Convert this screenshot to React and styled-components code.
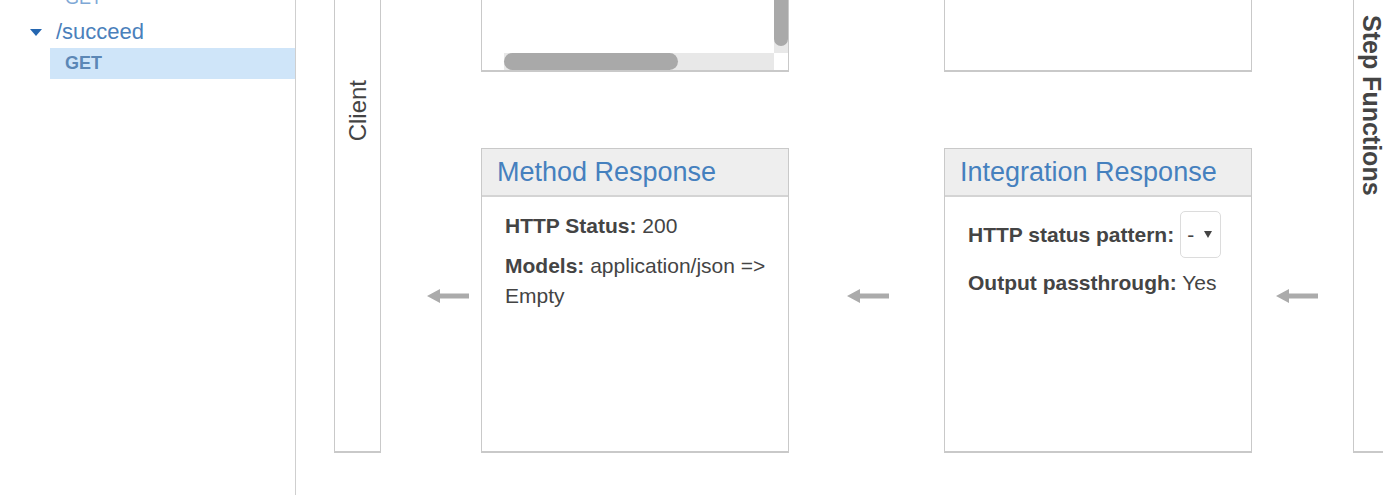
import styled, { createGlobalStyle } from "styled-components";

const GlobalStyle = createGlobalStyle`
  html, body {
    margin: 0;
    height: 100%;
    overflow: hidden;
    background: #fff;
  }
  body {
    font-family: "Liberation Sans", Arial, sans-serif;
    color: #444;
  }
`;

const Page = styled.div`
  display: flex;
  height: 100vh;
  overflow: hidden;
`;

const Sidebar = styled.nav`
  flex: 0 0 295px;
  border-right: 1px solid #cfcfcf;
  overflow: hidden;
`;

const Tree = styled.ul`
  list-style: none;
  margin: -17px 0 0;
  padding: 0;
`;

const ResourceRow = styled.li`
  display: flex;
  align-items: center;
  gap: 14px;
  height: 34px;
  padding: 2px 0 0 30px;
  box-sizing: border-box;
  font-size: 22px;
  line-height: 28px;
  color: #4a80bb;
`;

const Caret = styled.span`
  width: 0;
  height: 0;
  border-left: 6.5px solid transparent;
  border-right: 6.5px solid transparent;
  border-top: 7px solid #2466b0;
  margin-top: 1px;
`;

const MethodRow = styled.li`
  margin-left: 50px;
  height: 31px;
  padding-left: 15px;
  line-height: 31px;
  font-size: 18px;
  font-weight: ${({ $active }) => ($active ? 700 : 400)};
  color: ${({ $active }) => ($active ? "#5b87b6" : "#7ea8d6")};
  background: ${({ $active }) => ($active ? "#cfe5f9" : "transparent")};
`;

const Main = styled.main`
  flex: 1;
  overflow: hidden;
  padding-left: 38px;
`;

const Flow = styled.div`
  display: grid;
  grid-template-columns: 47px 100px 308px 155px 308px 101px 47px;
  grid-template-rows: 303px 305px;
  row-gap: 76px;
  margin-top: -231px;
`;

const SideLabel = styled.div`
  grid-row: 1 / span 2;
  grid-column: ${({ $col }) => $col};
  display: flex;
  align-items: center;
  justify-content: center;
  border: 1px solid #c9c9c9;
  border-bottom-width: 2px;
  padding-bottom: ${({ $lift }) => $lift || 0}px;
  padding-right: ${({ $shift }) => $shift || 0}px;
  box-sizing: border-box;
`;

const SideText = styled.span`
  writing-mode: vertical-rl;
  transform: ${({ $flip }) => ($flip ? "rotate(180deg)" : "none")};
  font-size: ${({ $bold }) => ($bold ? 25 : 24)}px;
  font-weight: ${({ $bold }) => ($bold ? 700 : 400)};
  color: #444;
  white-space: nowrap;
`;

const ArrowCell = styled.div`
  display: flex;
  align-items: center;
  padding-left: ${({ $inset }) => $inset}px;
  padding-bottom: 10px;
`;

const Box = styled.section`
  display: flex;
  flex-direction: column;
  border: 1px solid #c9c9c9;
  border-bottom-width: 2px;
  background: #fff;
  overflow: hidden;
  min-height: 0;
`;

const BoxHeader = styled.header`
  flex: 0 0 45px;
  padding: 1px 15px 0;
  background: #eeeeee;
  border-bottom: 2px solid #d4d4d4;
  font-size: 27px;
  line-height: 45px;
  color: #4580be;
  white-space: nowrap;
`;

const BoxBody = styled.div`
  padding: 14px 12px 0 23px;
  font-size: 21px;
  line-height: 30px;
`;

const Line = styled.div`
  display: flex;
  flex-wrap: wrap;
  align-items: center;
  column-gap: 6px;
  margin-bottom: 10px;
`;

const Text = styled.p`
  margin: 0 0 10px;
`;

const Label = styled.b`
  font-weight: 700;
`;

const Select = styled.div`
  display: inline-flex;
  align-items: center;
  gap: 10px;
  height: 47px;
  padding: 0 8px 0 6px;
  box-sizing: border-box;
  border: 1px solid #dcdcdc;
  border-radius: 5px;
  font-size: 21px;
`;

const SelectCaret = styled.span`
  width: 0;
  height: 0;
  border-left: 4.5px solid transparent;
  border-right: 4.5px solid transparent;
  border-top: 7px solid #444;
`;

const ScrollArea = styled.div`
  flex: 1;
  display: grid;
  grid-template-columns: 1fr 14px;
  grid-template-rows: 1fr 17px;
  min-height: 0;
`;

const VTrack = styled.div`
  display: flex;
  flex-direction: column;
  background: #e8e8e8;
  padding-bottom: 7px;
`;

const VThumb = styled.div`
  flex: 1;
  background: #a9a9a9;
  border-radius: 0 0 7px 7px;
`;

const HTrack = styled.div`
  margin-left: 22px;
  background: #e8e8e8;
`;

const HThumb = styled.div`
  width: 174px;
  height: 100%;
  background: #a9a9a9;
  border-radius: 9px;
`;

function Arrow({ dir = "left" }) {
  return (
    <svg
      width="42"
      height="16"
      viewBox="0 0 42 16"
      style={{ transform: dir === "right" ? "scaleX(-1)" : "none" }}
    >
      <path d="M0 8 L13 1 L13 5.5 L42 5.5 L42 10.5 L13 10.5 L13 15 Z" fill="#ababab" />
    </svg>
  );
}

export default function App() {
  return (
    <Page>
      <GlobalStyle />
      <Sidebar>
        <Tree>
          <MethodRow>GET</MethodRow>
          <ResourceRow>
            <Caret />
            /succeed
          </ResourceRow>
          <MethodRow $active>GET</MethodRow>
        </Tree>
      </Sidebar>

      <Main>
        <Flow>
          <SideLabel $col={1}>
            <SideText $flip>Client</SideText>
          </SideLabel>

          <ArrowCell $inset={46}>
            <Arrow dir="right" />
          </ArrowCell>

          <Box>
            <BoxHeader>Method Request</BoxHeader>
            <BoxBody>
              <Text>
                <Label>Auth:</Label> NONE
              </Text>
            </BoxBody>
            <ScrollArea>
              <div />
              <VTrack>
                <VThumb />
              </VTrack>
              <HTrack>
                <HThumb />
              </HTrack>
              <div />
            </ScrollArea>
          </Box>

          <ArrowCell $inset={58}>
            <Arrow dir="right" />
          </ArrowCell>

          <Box>
            <BoxHeader>Integration Request</BoxHeader>
            <BoxBody>
              <Text>
                <Label>Type:</Label> AWS Service
              </Text>
            </BoxBody>
          </Box>

          <ArrowCell $inset={24}>
            <Arrow dir="right" />
          </ArrowCell>

          <SideLabel $col={7} $lift={10} $shift={10}>
            <SideText $bold>Step Functions</SideText>
          </SideLabel>

          <ArrowCell $inset={46}>
            <Arrow />
          </ArrowCell>

          <Box>
            <BoxHeader>Method Response</BoxHeader>
            <BoxBody>
              <Text>
                <Label>HTTP Status:</Label> 200
              </Text>
              <Text>
                <Label>Models:</Label> application/json =&gt; Empty
              </Text>
            </BoxBody>
          </Box>

          <ArrowCell $inset={58}>
            <Arrow />
          </ArrowCell>

          <Box>
            <BoxHeader>Integration Response</BoxHeader>
            <BoxBody>
              <Line>
                <Label>HTTP status pattern:</Label>
                <Select>
                  -
                  <SelectCaret />
                </Select>
              </Line>
              <Text>
                <Label>Output passthrough:</Label> Yes
              </Text>
            </BoxBody>
          </Box>

          <ArrowCell $inset={24}>
            <Arrow />
          </ArrowCell>
        </Flow>
      </Main>
    </Page>
  );
}
